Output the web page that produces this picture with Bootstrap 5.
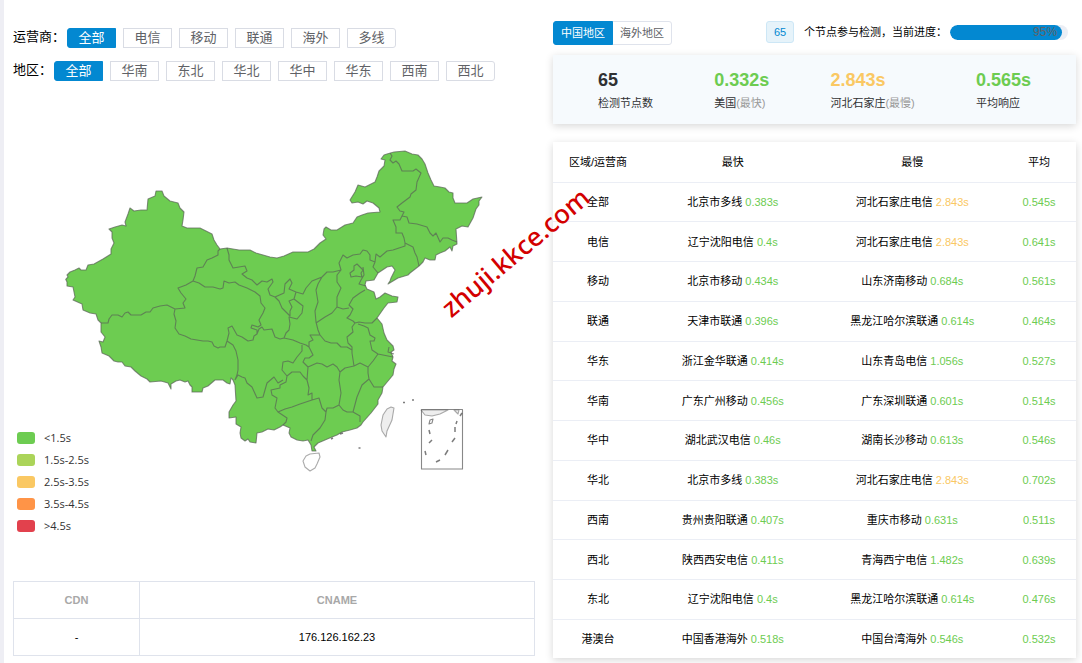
<!DOCTYPE html>
<html lang="zh-CN">
<head>
<meta charset="utf-8">
<meta name="viewport" content="width=device-width, initial-scale=1">
<title>节点检测</title>
<link href="https://cdn.jsdelivr.net/npm/bootstrap@5.3.0/dist/css/bootstrap.min.css" rel="stylesheet">
<style>
  :root { --blue: #0388d1; --green: #6dcc51; --amber: #fac863; --line: #dfe3ec; }
  body { font: 11px/16px "Liberation Sans", "Noto Sans CJK SC", sans-serif; color: #000; background: #fff; }
  .page { border-left: 4px solid #eeeef4; }
  .side-map { flex: 0 0 50%; min-width: 0; padding: 28px 8px 7px 9px; }
  .side-data { min-width: 0; padding: 21px 6px 5px 10px; }

  .filter-row { font-size: 13px; line-height: 20px; gap: 7px; }
  .filter-row + .filter-row { margin-top: 13px; }
  .filter-label { margin-right: -5px; line-height: 18px; }
  .chip { width: 49px; height: 20px; padding: 0; font-size: 13px; line-height: 16px; color: #606266; background: #fff; border: 1px solid #d9dce4; border-radius: 0; }
  .chip.first { border-radius: 3px 0 0 3px; }
  .chip.last { border-radius: 0 3px 3px 0; }
  .chip.active, .tab-btn.active { color: #fff; background: var(--blue); border-color: var(--blue); }

  .chart > * { grid-area: 1 / 1; }
  .chart { margin: 10px 0; }
  .legend-list { font: 11px/22px "Open Sans", "Noto Sans", sans-serif; color: #333; padding: 0 0 34px 4px; }
  .legend-list li { gap: 9px; }
  .swatch { width: 18px; height: 12px; border-radius: 3px; }

  .cdn-table { border: 1px solid var(--line); table-layout: fixed; }
  .cdn-table th, .cdn-table td { border: 1px solid var(--line); padding: 10px 4px; height: 37px; }
  .cdn-table th { color: #a8a8a8; }
  .cdn-table th:first-child { width: 126px; }

  .tab-btn { height: 24px; padding: 0 7px; font-size: 11px; line-height: 20px; color: #606266; background: #fff; border: 1px solid var(--line); border-radius: 3px; }
  .count-tag { width: 28px; height: 22px; line-height: 20px; color: var(--blue); background: #e6f3fa; border: 1px solid #cde7f6; border-radius: 3px; }
  .progress-text { margin: 0 3px 0 10px; }
  .meter { width: 118px; height: 15px; border-radius: 8px; background: #ebeef5; }
  .meter .progress-bar { background: var(--blue); border-radius: 8px; color: #606266; font-size: 12px; text-align: right; padding-right: 5px; }

  .panel { box-shadow: 0 2px 8px rgba(0, 0, 0, .16); }
  .stats { background: #f6fafd; height: 69px; padding: 15px 45px 0; margin: 10px 0 18px; color: #303133; }
  .stat-value { font-size: 18px; line-height: 20px; font-weight: 700; margin-bottom: 5px; }
  .muted { color: #999; }
  .node-table { table-layout: fixed; height: 516px; background: #fff; }
  .node-table th, .node-table td { font-weight: 400; padding: 0; border-bottom: 1px solid #ebeef5; }
  .node-table th { height: 40px; }
  .node-table tr:last-child td { border-bottom: 0; }
  .node-table th:first-child { width: 90px; }
  .node-table th:last-child { width: 74px; }
  .ok { color: var(--green); }
  .slow { color: var(--amber); }

  .watermark { position: absolute; left: 511px; top: 252px; transform: translate(-50%, -50%) rotate(-40deg); font: 500 26px/30px "Noto Sans", sans-serif; color: #d30000; pointer-events: none; white-space: nowrap; }
</style>
</head>
<body>
<main class="page d-flex position-relative">
  <section class="side-map">
    <div class="filter-row d-flex">
      <span class="filter-label">运营商：</span>
      <button type="button" class="chip first active">全部</button>
      <button type="button" class="chip">电信</button>
      <button type="button" class="chip">移动</button>
      <button type="button" class="chip">联通</button>
      <button type="button" class="chip">海外</button>
      <button type="button" class="chip last">多线</button>
    </div>
    <div class="filter-row d-flex">
      <span class="filter-label">地区：</span>
      <button type="button" class="chip first active">全部</button>
      <button type="button" class="chip">华南</button>
      <button type="button" class="chip">东北</button>
      <button type="button" class="chip">华北</button>
      <button type="button" class="chip">华中</button>
      <button type="button" class="chip">华东</button>
      <button type="button" class="chip">西南</button>
      <button type="button" class="chip last">西北</button>
    </div>

    <div class="chart d-grid">
      <svg class="w-100" viewBox="13 91 522 480" role="img" aria-label="中国地图">
        <g stroke="#596356" stroke-opacity=".7" stroke-width="1.1" stroke-linejoin="round" fill="none">
          <path fill="#6dcc51" d="M65.700 279.300L68 277 67 275 70 272 75 270 79 268 81 270 86 270 88 265 94 264 103 259 111 254 111 249 114 243 112 238 112 232 109 229 115 227 122 225 126 226 125 222 128 214 130 208 134 211 141 210 147 210 148 199 155 196 156 191 162 191 164 196 170 201 178 203 180 208 184 212 183 220 182 226 187 228 200 228 206 231 212 234 214 240 217 245 220 249 227 248 239 250 250 250 256 253 263 255 270 257 277 258 284 256 293 252 308 252 314 249 320 243 326 239 323 235 324 229 326 227 331 230 337 230 345 225 353 223 357 217 362 215 368 213 380 212 379 208 373 203 367 201 363 204 358 202 352 203 350 200 355 192 358 185 365 187 375 182 377 177 379 171 384 166 385 160 381 159 384 155 387 154 394 152 405 151 412 154 418 155 422 159 425 164 428 173 431 180 434 186 440 187 445 188 449 192 453 193 453 198 455 203 467 203 473 199 482 197 479 201 479 205 476 209 473 218 468 227 462 226 456 229 457 244 453 246 452 251 450 247 445 251 440 253 436 255 435 260 430 260 425 258 423 262 419 266 410 273 408 275 398 278 388 284 390 281 391 278 395 270 392 266 387 267 378 273 374 280 366 281 365 285 367 289 374 292 376 299 380 297 385 293 392 296 398 297 397 302 388 303 384 308 377 318 382 324 384 333 387 340 393 346 394 350 391 352 393 357 392 361 396 364 394 369 393 375 388 381 383 387 382 393 378 400 378 404 371 413 363 422 361 425 357 428 350 430 342 432 337 435 332 437 325 440 318 443 314 447 316 451 312 451 311 445 308 440 303 441 297 440 291 437 289 433 290 428 283 425 280 427 274 430 268 429 262 432 257 433 256 443 250 442 248 439 245 441 241 438 240 433 241 427 236 424 236 417 229 418 229 412 233 405 236 401 235 385 233 380 231 378 230 384 227 383 223 380 215 380 208 386 203 388 202 392 192 392 192 387 190 385 188 381 185 382 180 380 176 381 171 384 171 389 168 383 161 381 150 382 147 379 141 376 135 371 131 367 125 366 122 362 118 362 114 361 109 356 102 353 101 347 99 341 103 342 105 337 101 332 101 323 98 320 96 314 90 313 83 310 82 304 73 300 75 297 74 292 73 287 67 286 67 282Z"/>
          <path d="M101 323L108 323 109 319 112 315 118 315 122 317 125 313 128 312 131 315 135 315 141 315 146 312 150 312 153 308 160 306 167 305 175 309 185 308 183 303 186 299 181 293 178 288 186 285 193 281 195 276 197 268 203 267 207 260 212 258 218 255 218 251 220 249
          M175 309L174 314 176 321 175 328 179 334 185 336 191 339 203 341 208 341 212 342 214 346 218 348 220 347 225 347 227 341 233 345 236 351 238 360 238 370 237 375 235 380
          M193 281L199 283 205 287 213 287 220 289 223 288 224 281 229 283 235 282 239 285 247 288 255 292 260 296 261 303 265 308 263 313 259 320 261 325 258 327 252 325 251 328 257 330 257 334
          M227 341L229 333 228 328 232 326 237 335 242 337 248 341 253 340 254 336 257 334 259 329 262 327 264 330 272 329 275 337 280 339 284 338
          M227 248L229 255 229 260 233 268 239 267 245 266 247 271 242 274 247 278 252 280 257 285 262 281 267 282 272 279 273 282 268 289 270 295 275 297 284 293 285 284 290 279 292 283 289 289 296 292 294 299 289 301 292 307 290 311 290 316 282 308 279 301 275 297
          M294 299L303 306 302 313 297 319 289 317 290 324 289 330 286 333 284 338
          M296 292L303 294 306 288 312 281 317 279 322 277 318 284 316 290 318 302 315 311 316 322 318 330 320 335 325 341 331 343 337 343 341 347 347 347 352 350
          M322 277L327 272 333 272 341 270 339 263 343 255 347 258 353 255 360 254 363 250 367 251 370 255 370 260 375 262 373 267 378 273
          M341 270L337 275 337 282 341 288 337 297 337 307 332 313 325 317 316 323
          M375 262L376 254 380 257 387 251 393 250 405 246 405 243 413 247 415 253 417 257 419 266
          M405 243L404 238 402 233 396 233 396 227 393 220 400 220 402 216 404 212 400 211 397 207 402 203 410 197 411 194 416 190 417 182 421 173 416 169 413 171 402 171 399 164 396 161 393 163 390 160 392 156 390 153
          M402 216L407 217 409 223 417 224 427 227 430 233 433 236 436 233 440 242 443 238 448 238 452 240 457 242
          M350 273L354 270 354 266 357 264 363 270 361 273 362 277 356 276 351 277ZM363 267L364 275 361 280 359 284 366 286
          M365 290L360 293 353 298 349 305 353 309 350 315 347 318 353 321 355 323 359 322 365 323 372 323 377 318M337 307L343 309 349 308
          M355 323L352 327 353 332 347 337 348 343 352 347 352 353 354 366 360 363 368 367 373 361 378 354 388 356 393 357
          M358 324L364 326 368 328 370 335 375 338 374 341 370 341 372 350 378 354 M389 347L388 352 394 354
          M320 335L310 335 313 340 309 342 309 347 313 355 309 358 305 358 303 362 308 367 317 363 322 364 327 367 333 364 337 367 340 372 345 368 354 366
          M284 338L293 340 300 343 306 345 309 347M302 345L302 351 297 357 293 363 288 361 283 362 282 370 287 376 292 372 300 372 303 376 307 380 308 367
          M307 380L309 388 308 395 312 393 312 400 319 398 322 408 326 412 327 408 333 408 339 405 341 393 339 380 340 372
          M339 405L343 410 347 412 353 412 357 397 362 385 369 379 368 373 368 367M369 379L374 387 383 387M353 412L360 416 360 422
          M326 412L325 420 320 428 313 435 311 441M312 400L300 404 292 407 285 409 278 412 287 418 286 422 283 425
          M287 376L286 382 280 385 280 388 271 390 272 395 277 398 275 408 278 412M235 380L238 375 242 377 245 378 247 383 252 387 257 398 263 397 267 383 274 377 278 383 283 380"/>
          <path stroke="#888" fill="#fff" d="M319 453L320 457 317 464 315 468 310 471 305 467 303 461 306 456 310 454Z"/>
          <path stroke="#888" fill="#eee" d="M391 407L394 408 392 420 387 431 386 437 382 431 381 425 383 415 387 409ZM421 410L425 415 432 416 440 414 448 410ZM454 410L458 414 459 410Z"/>
          <path stroke="#555" d="M421.500 409.500H462.500V469H421.500ZM429 424l1-4 3-1-1 4z"/>
          <path stroke="#444" stroke-width="1.5" d="M429 430l1 4M429 443l3-3M425 451l1 4M436 462l4-2M445 455l3-5M452 442l3-4M455 427v5M456 424l1-3M460 416l2-3M403 402.500h2M412 400h2M358.500 448h2M331 439l2-1M340 434l3-1"/>
        </g>
      </svg>
      <ul class="legend-list list-unstyled mb-0 align-self-end">
        <li class="d-flex align-items-center"><svg class="swatch" aria-hidden="true"><rect width="18" height="12" fill="#6dcc51"/></svg>&lt;1.5s</li>
        <li class="d-flex align-items-center"><svg class="swatch" aria-hidden="true"><rect width="18" height="12" fill="#abd459"/></svg>1.5s-2.5s</li>
        <li class="d-flex align-items-center"><svg class="swatch" aria-hidden="true"><rect width="18" height="12" fill="#fac863"/></svg>2.5s-3.5s</li>
        <li class="d-flex align-items-center"><svg class="swatch" aria-hidden="true"><rect width="18" height="12" fill="#ff9447"/></svg>3.5s-4.5s</li>
        <li class="d-flex align-items-center"><svg class="swatch" aria-hidden="true"><rect width="18" height="12" fill="#e2414d"/></svg>&gt;4.5s</li>
      </ul>
    </div>

    <table class="cdn-table w-100 text-center">
      <thead><tr><th scope="col">CDN</th><th scope="col">CNAME</th></tr></thead>
      <tbody><tr><td>-</td><td>176.126.162.23</td></tr></tbody>
    </table>
  </section>

  <section class="side-data flex-grow-1">
    <div class="d-flex align-items-start">
      <div class="btn-group" role="group" aria-label="地区">
        <button type="button" class="btn tab-btn active">中国地区</button>
        <button type="button" class="btn tab-btn">海外地区</button>
      </div>
      <div class="d-flex align-items-center ms-auto pe-2">
        <span class="count-tag text-center">65</span>
        <span id="progress-label" class="progress-text">个节点参与检测，当前进度：</span>
        <div class="progress meter" role="progressbar" aria-labelledby="progress-label" aria-valuenow="95" aria-valuemin="0" aria-valuemax="100">
          <div class="progress-bar" style="width:95%">95%</div>
        </div>
      </div>
    </div>

    <div class="stats panel d-flex justify-content-between">
      <div><div class="stat-value">65</div>检测节点数</div>
      <div><div class="stat-value ok">0.332s</div>美国<span class="muted">(最快)</span></div>
      <div><div class="stat-value slow">2.843s</div>河北石家庄<span class="muted">(最慢)</span></div>
      <div><div class="stat-value ok">0.565s</div>平均响应</div>
    </div>

    <table class="node-table panel w-100 text-center">
      <thead><tr><th scope="col">区域/运营商</th><th scope="col">最快</th><th scope="col">最慢</th><th scope="col">平均</th></tr></thead>
      <tbody>
        <tr><td>全部</td><td>北京市多线 <span class="ok">0.383s</span></td><td>河北石家庄电信 <span class="slow">2.843s</span></td><td class="ok">0.545s</td></tr>
        <tr><td>电信</td><td>辽宁沈阳电信 <span class="ok">0.4s</span></td><td>河北石家庄电信 <span class="slow">2.843s</span></td><td class="ok">0.641s</td></tr>
        <tr><td>移动</td><td>北京市移动 <span class="ok">0.434s</span></td><td>山东济南移动 <span class="ok">0.684s</span></td><td class="ok">0.561s</td></tr>
        <tr><td>联通</td><td>天津市联通 <span class="ok">0.396s</span></td><td>黑龙江哈尔滨联通 <span class="ok">0.614s</span></td><td class="ok">0.464s</td></tr>
        <tr><td>华东</td><td>浙江金华联通 <span class="ok">0.414s</span></td><td>山东青岛电信 <span class="ok">1.056s</span></td><td class="ok">0.527s</td></tr>
        <tr><td>华南</td><td>广东广州移动 <span class="ok">0.456s</span></td><td>广东深圳联通 <span class="ok">0.601s</span></td><td class="ok">0.514s</td></tr>
        <tr><td>华中</td><td>湖北武汉电信 <span class="ok">0.46s</span></td><td>湖南长沙移动 <span class="ok">0.613s</span></td><td class="ok">0.546s</td></tr>
        <tr><td>华北</td><td>北京市多线 <span class="ok">0.383s</span></td><td>河北石家庄电信 <span class="slow">2.843s</span></td><td class="ok">0.702s</td></tr>
        <tr><td>西南</td><td>贵州贵阳联通 <span class="ok">0.407s</span></td><td>重庆市移动 <span class="ok">0.631s</span></td><td class="ok">0.511s</td></tr>
        <tr><td>西北</td><td>陕西西安电信 <span class="ok">0.411s</span></td><td>青海西宁电信 <span class="ok">1.482s</span></td><td class="ok">0.639s</td></tr>
        <tr><td>东北</td><td>辽宁沈阳电信 <span class="ok">0.4s</span></td><td>黑龙江哈尔滨联通 <span class="ok">0.614s</span></td><td class="ok">0.476s</td></tr>
        <tr><td>港澳台</td><td>中国香港海外 <span class="ok">0.518s</span></td><td>中国台湾海外 <span class="ok">0.546s</span></td><td class="ok">0.532s</td></tr>
      </tbody>
    </table>
  </section>
  <div class="watermark">zhuji.kkce.com</div>
</main>
<script src="https://cdn.jsdelivr.net/npm/bootstrap@5.3.0/dist/js/bootstrap.bundle.min.js"></script>
</body>
</html>
